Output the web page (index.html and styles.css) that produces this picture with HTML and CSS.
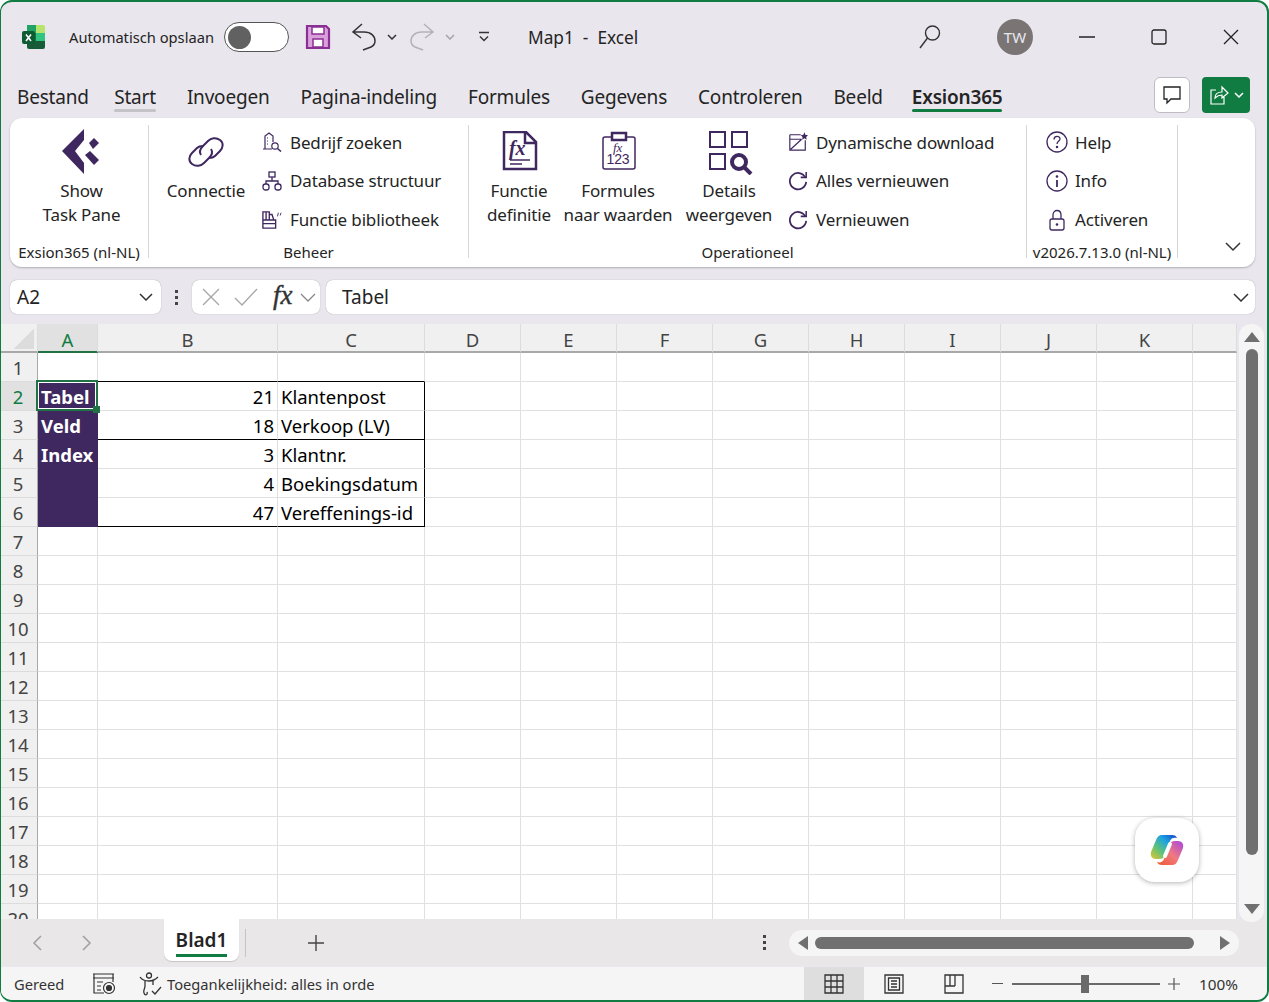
FILE: index.html
```html
<!DOCTYPE html>
<html lang="nl">
<head>
    <meta charset="UTF-8">
    <title>Map1 - Excel</title>
    <link rel="stylesheet" href="styles.css">
</head>
<body>
<div class="window">
    <!-- title bar -->
    <header class="titlebar">
        <svg class="app-icon" width="26" height="26" viewBox="0 0 26 26">
            <rect x="7" y="1" width="9" height="8" fill="#21a366"/>
            <path d="M16 1h7a2 2 0 0 1 2 2v6h-9z" fill="#b7e46c"/>
            <rect x="7" y="9" width="9" height="8" fill="#107c41"/>
            <rect x="16" y="9" width="9" height="8" fill="#33c481"/>
            <path d="M7 17h18v6a2 2 0 0 1-2 2H9a2 2 0 0 1-2-2z" fill="#185c37"/>
            <rect x="2" y="7" width="13" height="13" rx="2" fill="#0f5c33"/>
            <path d="M6 10.500l5 6.500M11 10.500L6 17" stroke="#fff" stroke-width="1.600" fill="none"/>
        </svg>
        <span class="autosave">Automatisch opslaan</span>
        <span class="toggle"><span class="toggle-knob"></span></span>
        <svg class="save-icon" width="26" height="26" viewBox="0 0 26 26">
            <path d="M2 2h19l3 3v19H2z" fill="#d9a0dc" stroke="#8a2f93" stroke-width="2.200"/>
            <rect x="7" y="3" width="12" height="7" fill="#fff" stroke="#8a2f93" stroke-width="1.500"/>
            <rect x="8" y="15" width="10" height="8" fill="#fff" stroke="#8a2f93" stroke-width="1.500"/>
        </svg>
        <svg class="undo-icon" width="26" height="28" viewBox="0 0 26 28" fill="none" stroke="#333" stroke-width="1.500">
            <path d="M11 1L2 9l8 6M2 9h11c7 0 11 4 11 9 0 3-2 5-4 6l-8 3"/>
        </svg>
        <svg class="chev-small" width="10" height="6" viewBox="0 0 10 6" fill="none" stroke="#333" stroke-width="1.500"><path d="M1 1l4 4 4-4"/></svg>
        <svg class="redo-icon" width="26" height="28" viewBox="0 0 26 28" fill="none" stroke="#b4b2b8" stroke-width="1.500">
            <path d="M15 1l9 8-8 6M24 9H13C6 9 2 13 2 18c0 3 2 5 4 6l8 3"/>
        </svg>
        <svg class="chev-small" width="10" height="6" viewBox="0 0 10 6" fill="none" stroke="#a5a3a9" stroke-width="1.500"><path d="M1 1l4 4 4-4"/></svg>
        <svg class="custom-icon" width="12" height="12" viewBox="0 0 12 12" fill="none" stroke="#333" stroke-width="1.400"><path d="M1 1.500h10M2 5.500l4 4 4-4"/></svg>
        <span class="doc-title">Map1&nbsp; -&nbsp; Excel</span>
        <svg class="search-icon" width="24" height="26" viewBox="0 0 24 26" fill="none" stroke="#333" stroke-width="1.400">
            <circle cx="14.500" cy="9" r="7"/><path d="M9.500 14L2 24"/>
        </svg>
        <span class="avatar">TW</span>
        <span class="win-btn win-first"><svg width="16" height="16" viewBox="0 0 16 16" stroke="#222" stroke-width="1.300"><path d="M0 8h16"/></svg></span>
        <span class="win-btn"><svg width="16" height="16" viewBox="0 0 16 16" fill="none" stroke="#222" stroke-width="1.300"><rect x="1" y="1" width="14" height="14" rx="2"/></svg></span>
        <span class="win-btn"><svg width="16" height="16" viewBox="0 0 16 16" stroke="#222" stroke-width="1.300"><path d="M1 1l14 14M15 1L1 15"/></svg></span>
    </header>

    <!-- ribbon tabs -->
    <nav class="tabs">
        <span class="tab tab-first">Bestand</span>
        <span class="tab tab-start">Start</span>
        <span class="tab">Invoegen</span>
        <span class="tab">Pagina-indeling</span>
        <span class="tab">Formules</span>
        <span class="tab">Gegevens</span>
        <span class="tab">Controleren</span>
        <span class="tab tab-beeld">Beeld</span>
        <span class="tab tab-active">Exsion365</span>
        <span class="comment-btn">
            <svg width="20" height="20" viewBox="0 0 20 20" fill="none" stroke="#222" stroke-width="1.300"><path d="M2 2h16v12H9l-4 4v-4H2z"/></svg>
        </span>
        <span class="share-btn">
            <svg width="20" height="20" viewBox="0 0 20 20" fill="none" stroke="#fff" stroke-width="1.200"><path d="M7 5H2v14h13v-7M6 13c0-4 3-6 7-6V2l6 6-6 5V10c-3 0-5 1-7 3z"/></svg>
            <svg width="10" height="6" viewBox="0 0 10 6" fill="none" stroke="#fff" stroke-width="1.500"><path d="M1 1l4 4 4-4"/></svg>
        </span>
    </nav>

    <!-- ribbon -->
    <section class="ribbon">
        <div class="group group-pane">
            <div class="group-items">
                <div class="big-btn">
                    <svg class="big-icon" width="40" height="46" viewBox="0 0 40 46" fill="#3f2760">
                        <path d="M22 0L0 22l22 23V34L13 22l9-11z"/>
                        <path d="M27 14l5-5 5 5-6 6z"/>
                        <path d="M23 26l5-4 9 9-5 5z"/>
                    </svg>
                    <span>Show<br>Task Pane</span>
                </div>
            </div>
            <div class="group-label">Exsion365 (nl-NL)</div>
        </div>
        <div class="group group-beheer">
            <div class="group-items">
                <div class="big-btn btn-conn">
                    <svg class="big-icon" width="36" height="34" viewBox="0 0 36 34" fill="none" stroke="#3f2760" stroke-width="2">
                        <path d="M13 20c-2-3-1-6 2-9l5-5c3-3 8-4 12-1s3 8 0 11l-5 5c-2 2-4 2-6 2"/>
                        <path d="M23 14c2 3 1 6-2 9l-5 5c-3 3-8 4-12 1s-3-8 0-11l5-5c2-2 4-2 6-2"/>
                    </svg>
                    <span>Connectie</span>
                </div>
                <div class="small-list">
                    <div class="small-btn">
                        <svg width="20" height="20" viewBox="0 0 20 20" fill="none" stroke="#3f2760" stroke-width="1.200"><path d="M3 17V4l4-3 4 3v6M1 17h9M5 6h1M5 9h1M5 12h1"/><circle cx="13" cy="14" r="3.200"/><path d="M15.500 16.500L19 19.500" stroke-width="1.600"/></svg>
                        <span>Bedrijf zoeken</span>
                    </div>
                    <div class="small-btn">
                        <svg width="20" height="20" viewBox="0 0 20 20" fill="none" stroke="#3f2760" stroke-width="1.300"><rect x="7" y="1" width="6" height="5"/><rect x="1" y="13" width="6" height="6" rx="2.500"/><rect x="13" y="13" width="6" height="6" rx="2.500"/><path d="M10 6v4M4 13v-3h12v3"/></svg>
                        <span>Database structuur</span>
                    </div>
                    <div class="small-btn">
                        <svg width="22" height="20" viewBox="0 0 22 20" fill="none" stroke="#3f2760" stroke-width="1.500"><path d="M1 1h7v9H1zM4.500 1v9M8 4h3l2 6H1M1 10h14v4H1zM1 14h14v5H1z"/><path d="M17 6l1-4M20 5l1-3" stroke-width="1"/></svg>
                        <span>Functie bibliotheek</span>
                    </div>
                </div>
            </div>
            <div class="group-label">Beheer</div>
        </div>
        <div class="group group-oper">
            <div class="group-items">
                <div class="big-btn btn-func">
                    <svg class="big-icon icon-doc" width="36" height="40" viewBox="0 0 36 40" fill="none" stroke="#3f2760" stroke-width="2.500">
                        <path d="M2 1h22l10 10v27H2zM23 1v11h11"/>
                        <path d="M8 29h20M8 33h12" stroke-width="1.300"/>
                        <text x="7" y="24" class="svg-fx">fx</text>
                    </svg>
                    <span>Functie<br>definitie</span>
                </div>
                <div class="big-btn btn-form">
                    <svg class="big-icon icon-doc" width="34" height="40" viewBox="0 0 34 40" fill="none" stroke="#3f2760" stroke-width="1.500">
                        <path d="M9 6H3a2 2 0 0 0-2 2v28a2 2 0 0 0 2 2h28a2 2 0 0 0 2-2V8a2 2 0 0 0-2-2h-6"/>
                        <rect x="10" y="2" width="14" height="7" stroke-width="2.500"/>
                        <text x="11" y="21" class="svg-fx-small">fx</text>
                        <text x="4.500" y="33" class="svg-num">123</text>
                    </svg>
                    <span>Formules<br>naar waarden</span>
                </div>
                <div class="big-btn btn-det">
                    <svg class="big-icon icon-det" width="44" height="44" viewBox="0 0 44 44" fill="none" stroke="#3f2760" stroke-width="2">
                        <rect x="1" y="1" width="15" height="15"/><rect x="23" y="1" width="15" height="15"/><rect x="1" y="23" width="15" height="15"/>
                        <circle cx="30" cy="31" r="7" stroke-width="4"/><path d="M35 36l7 7" stroke-width="4"/>
                    </svg>
                    <span>Details<br>weergeven</span>
                </div>
                <div class="small-list list-oper">
                    <div class="small-btn">
                        <svg width="22" height="22" viewBox="0 0 22 22" fill="none" stroke="#3f2760" stroke-width="1.300"><path d="M2 3h12M2 3v17h17V9M2 8h13M3 19L15 8"/><path d="M18 0l1 3 3 .5-2 2 .5 3-2.500-1.500-2.500 1.500.5-3-2-2 3-.5z" fill="#3f2760" stroke="none"/></svg>
                        <span>Dynamische download</span>
                    </div>
                    <div class="small-btn">
                        <svg width="22" height="22" viewBox="0 0 22 22" fill="none" stroke="#3f2760" stroke-width="1.900"><path d="M19 7a9 9 0 1 0 1 5"/><path d="M20 1v6h-6" stroke-width="1.700"/></svg>
                        <span>Alles vernieuwen</span>
                    </div>
                    <div class="small-btn">
                        <svg width="22" height="22" viewBox="0 0 22 22" fill="none" stroke="#3f2760" stroke-width="1.900"><path d="M19 7a9 9 0 1 0 1 5"/><path d="M20 1v6h-6" stroke-width="1.700"/></svg>
                        <span>Vernieuwen</span>
                    </div>
                </div>
            </div>
            <div class="group-label">Operationeel</div>
        </div>
        <div class="group group-help">
            <div class="group-items">
                <div class="small-list list-help">
                    <div class="small-btn">
                        <svg width="22" height="22" viewBox="0 0 22 22" fill="none" stroke="#3f2760" stroke-width="1.300"><circle cx="11" cy="11" r="10"/><path d="M8 8.500c0-4 6-4 6-.5 0 2-3 2-3 5"/><circle cx="11" cy="16" r=".6"/></svg>
                        <span>Help</span>
                    </div>
                    <div class="small-btn">
                        <svg width="22" height="22" viewBox="0 0 22 22" fill="none" stroke="#3f2760" stroke-width="1.300"><circle cx="11" cy="11" r="10"/><path d="M11 10v7" stroke-width="1.800"/><circle cx="11" cy="6.500" r=".7"/></svg>
                        <span>Info</span>
                    </div>
                    <div class="small-btn">
                        <svg width="22" height="22" viewBox="0 0 22 22" fill="none" stroke="#3f2760" stroke-width="1.300"><rect x="4" y="10" width="14" height="11" rx="2"/><path d="M7 10V6c0-6 8-6 8 0v4"/><circle cx="11" cy="15.500" r=".7"/></svg>
                        <span>Activeren</span>
                    </div>
                </div>
            </div>
            <div class="group-label">v2026.7.13.0 (nl-NL)</div>
        </div>
        <div class="ribbon-end">
            <svg width="16" height="10" viewBox="0 0 16 10" fill="none" stroke="#333" stroke-width="1.500"><path d="M1 1l7 7 7-7"/></svg>
        </div>
    </section>

    <!-- formula bar -->
    <div class="formula-bar">
        <div class="name-box">
            <span>A2</span>
            <svg width="14" height="8" viewBox="0 0 14 8" fill="none" stroke="#333" stroke-width="1.500"><path d="M1 1l6 6 6-6"/></svg>
        </div>
        <div class="fb-dots"><i></i><i></i><i></i></div>
        <div class="fb-buttons">
            <svg width="18" height="18" viewBox="0 0 18 18" stroke="#a8a8a8" stroke-width="1.400"><path d="M1 1l16 16M17 1L1 17"/></svg>
            <svg width="24" height="18" viewBox="0 0 24 18" fill="none" stroke="#a8a8a8" stroke-width="1.400"><path d="M1 10l7 7L23 1"/></svg>
            <span class="fx">fx</span>
            <svg width="16" height="9" viewBox="0 0 16 9" fill="none" stroke="#888" stroke-width="1.300"><path d="M1 1l7 7 7-7"/></svg>
        </div>
        <div class="fb-input">
            <span>Tabel</span>
            <svg width="16" height="9" viewBox="0 0 16 9" fill="none" stroke="#333" stroke-width="1.500"><path d="M1 1l7 7 7-7"/></svg>
        </div>
    </div>

    <!-- sheet -->
    <div class="sheet-area">
        <div class="sheet">
            <table class="cells">
                <colgroup>
                    <col class="c-head"><col class="c-a"><col class="c-b"><col class="c-c">
                    <col class="c-n"><col class="c-n"><col class="c-n"><col class="c-n"><col class="c-n"><col class="c-n"><col class="c-n"><col class="c-n"><col>
                </colgroup>
                <thead>
                    <tr>
                        <th class="corner"><span class="corner-mark"></span></th>
                        <th class="col-sel">A</th><th>B</th><th>C</th><th>D</th><th>E</th><th>F</th><th>G</th><th>H</th><th>I</th><th>J</th><th>K</th><th></th>
                    </tr>
                </thead>
                <tbody>
                    <tr><th>1</th><td></td><td class="bottom-line"></td><td class="bottom-line"></td><td></td><td></td><td></td><td></td><td></td><td></td><td></td><td></td><td></td></tr>
                    <tr><th class="row-sel">2</th><td class="label current">Tabel<span class="sel-box"><span class="sel-handle"></span></span></td><td class="num">21</td><td class="txt end-line">Klantenpost</td><td></td><td></td><td></td><td></td><td></td><td></td><td></td><td></td><td></td></tr>
                    <tr><th>3</th><td class="label">Veld</td><td class="num bottom-line">18</td><td class="txt bottom-line end-line">Verkoop (LV)</td><td></td><td></td><td></td><td></td><td></td><td></td><td></td><td></td><td></td></tr>
                    <tr><th>4</th><td class="label">Index</td><td class="num">3</td><td class="txt end-line">Klantnr.</td><td></td><td></td><td></td><td></td><td></td><td></td><td></td><td></td><td></td></tr>
                    <tr><th>5</th><td class="label"></td><td class="num">4</td><td class="txt end-line">Boekingsdatum</td><td></td><td></td><td></td><td></td><td></td><td></td><td></td><td></td><td></td></tr>
                    <tr><th>6</th><td class="label"></td><td class="num bottom-line">47</td><td class="txt bottom-line end-line">Vereffenings-id</td><td></td><td></td><td></td><td></td><td></td><td></td><td></td><td></td><td></td></tr>
                    <tr><th>7</th><td></td><td></td><td></td><td></td><td></td><td></td><td></td><td></td><td></td><td></td><td></td><td></td></tr>
                    <tr><th>8</th><td></td><td></td><td></td><td></td><td></td><td></td><td></td><td></td><td></td><td></td><td></td><td></td></tr>
                    <tr><th>9</th><td></td><td></td><td></td><td></td><td></td><td></td><td></td><td></td><td></td><td></td><td></td><td></td></tr>
                    <tr><th>10</th><td></td><td></td><td></td><td></td><td></td><td></td><td></td><td></td><td></td><td></td><td></td><td></td></tr>
                    <tr><th>11</th><td></td><td></td><td></td><td></td><td></td><td></td><td></td><td></td><td></td><td></td><td></td><td></td></tr>
                    <tr><th>12</th><td></td><td></td><td></td><td></td><td></td><td></td><td></td><td></td><td></td><td></td><td></td><td></td></tr>
                    <tr><th>13</th><td></td><td></td><td></td><td></td><td></td><td></td><td></td><td></td><td></td><td></td><td></td><td></td></tr>
                    <tr><th>14</th><td></td><td></td><td></td><td></td><td></td><td></td><td></td><td></td><td></td><td></td><td></td><td></td></tr>
                    <tr><th>15</th><td></td><td></td><td></td><td></td><td></td><td></td><td></td><td></td><td></td><td></td><td></td><td></td></tr>
                    <tr><th>16</th><td></td><td></td><td></td><td></td><td></td><td></td><td></td><td></td><td></td><td></td><td></td><td></td></tr>
                    <tr><th>17</th><td></td><td></td><td></td><td></td><td></td><td></td><td></td><td></td><td></td><td></td><td></td><td></td></tr>
                    <tr><th>18</th><td></td><td></td><td></td><td></td><td></td><td></td><td></td><td></td><td></td><td></td><td></td><td></td></tr>
                    <tr><th>19</th><td></td><td></td><td></td><td></td><td></td><td></td><td></td><td></td><td></td><td></td><td></td><td></td></tr>
                    <tr><th>20</th><td></td><td></td><td></td><td></td><td></td><td></td><td></td><td></td><td></td><td></td><td></td><td></td></tr>
                </tbody>
            </table>
            <div class="copilot">
                <svg width="34" height="32" viewBox="0 0 34 32">
                    <defs>
                        <linearGradient id="cpA" x1="0" y1="1" x2="1" y2="0">
                            <stop offset="0" stop-color="#e8c52c"/><stop offset=".35" stop-color="#5fc27a"/><stop offset=".65" stop-color="#1fa4e0"/><stop offset="1" stop-color="#1440c8"/>
                        </linearGradient>
                        <linearGradient id="cpB" x1="0" y1="1" x2="1" y2="0">
                            <stop offset="0" stop-color="#f0562e"/><stop offset=".5" stop-color="#f07a80"/><stop offset="1" stop-color="#a845e0"/>
                        </linearGradient>
                    </defs>
                    <path d="M22 31H12c-3 0-4-1-5-3 3 1 6 0 7-3l5-14c1-3 3-4 6-4h3c4 0 6 3 5 7l-5 12c-1 3-3 5-6 5z" fill="url(#cpB)"/>
                    <path d="M12 1h10c3 0 4 1 5 3-3-1-6 0-7 3l-5 14c-1 3-3 4-6 4H6C2 25 0 22 1 18L6 6c1-3 3-5 6-5z" fill="url(#cpA)"/>
                    <path d="M20 10l-5 12" stroke="#fff" stroke-width="4" stroke-linecap="round"/>
                </svg>
            </div>
        </div>
        <div class="v-scroll">
            <span class="arrow-up"></span>
            <span class="v-thumb"></span>
            <span class="arrow-down"></span>
        </div>
    </div>

    <!-- sheet tabs -->
    <div class="tabstrip">
        <svg class="nav-prev" width="10" height="16" viewBox="0 0 10 16" fill="none" stroke="#a0a0a0" stroke-width="1.500"><path d="M9 1L2 8l7 7"/></svg>
        <svg class="nav-next" width="10" height="16" viewBox="0 0 10 16" fill="none" stroke="#a0a0a0" stroke-width="1.500"><path d="M1 1l7 7-7 7"/></svg>
        <div class="sheet-tab"><span>Blad1</span></div>
        <span class="tab-sep"></span>
        <svg class="add-sheet" width="18" height="18" viewBox="0 0 18 18" stroke="#444" stroke-width="1.400"><path d="M9 1v16M1 9h16"/></svg>
        <div class="fb-dots strip-dots"><i></i><i></i><i></i></div>
        <div class="h-scroll">
            <span class="arrow-left"></span>
            <span class="h-thumb"></span>
            <span class="arrow-right"></span>
        </div>
    </div>

    <!-- status bar -->
    <footer class="statusbar">
        <span class="st-ready">Gereed</span>
        <svg class="st-macro" width="24" height="22" viewBox="0 0 24 22" fill="none" stroke="#333" stroke-width="1.200">
            <path d="M1 1h21M1 5h21M2 1v19h10M21 1v8M5 9h6M5 13h4M5 17h4"/>
            <circle cx="17" cy="15" r="5.500"/><circle cx="17" cy="15" r="2.500" fill="#333"/>
        </svg>
        <svg class="st-access" width="24" height="24" viewBox="0 0 24 24" fill="none" stroke="#333" stroke-width="1.300">
            <circle cx="10" cy="3.500" r="2.500"/>
            <path d="M1 5c2 3 5 4 9 4s6-1 9-4M6 9v5c0 3-2 4-1 7s4 2 3-1M14 9v4M13 19l3 3 6-7"/>
        </svg>
        <span class="st-text">Toegankelijkheid: alles in orde</span>
        <span class="view-btn view-on">
            <svg width="20" height="20" viewBox="0 0 20 20" fill="none" stroke="#333" stroke-width="1.300"><path d="M1 1h18v18H1zM7 1v18M13 1v18M1 7h18M1 13h18"/></svg>
        </span>
        <span class="view-btn">
            <svg width="20" height="20" viewBox="0 0 20 20" fill="none" stroke="#333" stroke-width="1.300"><path d="M1 1h18v18H1zM4.500 4h11v12h-11zM7 7h6M7 10h6M7 13h6"/></svg>
        </span>
        <span class="view-btn">
            <svg width="20" height="20" viewBox="0 0 20 20" fill="none" stroke="#333" stroke-width="1.300"><path d="M1 1h18v18H1zM1 12h10M6 1v11M11 1v11"/></svg>
        </span>
        <span class="zoom-minus"></span>
        <span class="zoom-track"><span class="zoom-thumb"></span></span>
        <svg class="zoom-plus" width="12" height="12" viewBox="0 0 12 12" stroke="#555" stroke-width="1.200"><path d="M6 0v12M0 6h12"/></svg>
        <span class="zoom-val">100%</span>
    </footer>
</div>
</body>
</html>
```
FILE: styles.css
```css
* {
    margin: 0;
    padding: 0;
    box-sizing: border-box;
}

body {
    width: 1269px;
    height: 1002px;
    overflow: hidden;
    font-family: "Noto Sans", sans-serif;
    color: #242424;
    background: #fff;
}

.window {
    width: 1269px;
    height: 1002px;
    display: flex;
    flex-direction: column;
    background: #e9e6ed;
    border: 2px solid #107c41;
    border-width: 2px 2px 2px 1px;
    border-radius: 12px;
    overflow: hidden;
}

/* title bar */
.titlebar {
    height: 70px;
    flex: none;
    display: flex;
    align-items: center;
    padding-left: 19px;
}

.autosave {
    margin-left: 23px;
    font-size: 14.700px;
    width: 155px;
    white-space: nowrap;
}

.toggle {
    width: 65px;
    height: 30px;
    border: 1px solid #555;
    border-radius: 15px;
    background: #fff;
    display: flex;
    align-items: center;
    padding-left: 3px;
}

.toggle-knob {
    width: 23px;
    height: 23px;
    border-radius: 50%;
    background: #616161;
}

.save-icon { margin-left: 16px; }
.undo-icon { margin-left: 20px; }
.chev-small { margin-left: 10px; }
.redo-icon { margin-left: 12px; }
.custom-icon { margin-left: 23px; }

.doc-title {
    margin-left: 38px;
    font-size: 17.300px;
    width: 390px;
    white-space: nowrap;
}

.avatar {
    margin-left: 55px;
    width: 36px;
    height: 36px;
    border-radius: 50%;
    background: #7a7574;
    color: #e8e8f0;
    font-size: 15px;
    display: flex;
    align-items: center;
    justify-content: center;
}

.win-btn {
    width: 72px;
    display: flex;
    justify-content: center;
}

.win-first { margin-left: 18px; }

/* ribbon tabs */
.tabs {
    height: 46px;
    flex: none;
    display: flex;
    align-items: center;
    gap: 31px;
    padding: 3px 0 0 16px;
    font-size: 19px;
    letter-spacing: -0.2px;
}

.tab {
    position: relative;
    white-space: nowrap;
}

.tab-first { margin-right: -5.500px; }
.tab-beeld { margin-right: -2px; }

.tab-start::after,
.tab-active::after {
    content: "";
    position: absolute;
    left: 0;
    right: 0;
    bottom: -2px;
    height: 3px;
    border-radius: 2px;
    background: #c4c4c6;
}

.tab-active {
    font-weight: 600;
}

.tab-active::after {
    background: #107c41;
}

.comment-btn {
    margin-left: auto;
    margin-top: -4px;
    width: 36px;
    height: 36px;
    background: #fff;
    border: 1px solid #c0bcc4;
    border-radius: 6px;
    display: flex;
    align-items: center;
    justify-content: center;
}

.share-btn {
    margin: -4px 17px 0 -19px;
    width: 48px;
    height: 36px;
    background: #107c41;
    border-radius: 4px;
    display: flex;
    align-items: center;
    justify-content: center;
    gap: 5px;
}

/* ribbon */
.ribbon {
    height: 149px;
    flex: none;
    margin-left: 9px;
    width: 1245px;
    background: #fff;
    border-radius: 12px;
    box-shadow: 0 1px 2px rgba(0, 0, 0, 0.25);
    display: flex;
    padding-top: 7px;
    font-size: 17px;
    letter-spacing: -0.15px;
}

.group {
    display: flex;
    flex-direction: column;
    border-right: 1px solid #d6d6d6;
    height: 133px;
}

.group-pane { width: 139px; }
.group-beheer { width: 320px; }
.group-oper { width: 558px; }
.group-help { width: 151px; }

.group-items {
    height: 114px;
    flex: none;
    display: flex;
}

.group-label {
    height: 19px;
    text-align: center;
    font-size: 15px;
    letter-spacing: 0;
    line-height: 26px;
    white-space: nowrap;
}

.big-btn {
    display: flex;
    flex-direction: column;
    align-items: center;
    text-align: center;
    line-height: 24px;
    white-space: nowrap;
}

.big-btn .big-icon {
    height: 46px;
    margin: 4px 0;
    flex: none;
}

.big-btn .icon-doc {
    height: 40px;
    margin: 6px 0 8px 2px;
}

.big-btn .icon-det {
    height: 44px;
    margin: 6px 0 4px 3px;
}

.group-pane .big-btn {
    width: 100%;
    padding-left: 5px;
}

.btn-conn { width: 96px; margin-left: 9px; }
.btn-func { width: 90px; margin-left: 5px; }
.btn-form { width: 108px; }
.btn-det { width: 114px; }

.small-list {
    display: flex;
    flex-direction: column;
    margin: 1px 0 0 8px;
    gap: 6.800px;
}

.small-btn {
    height: 32px;
    display: flex;
    align-items: center;
    gap: 8px;
    white-space: nowrap;
}

.small-btn svg {
    width: 20px;
    flex: none;
}

.list-oper { margin-left: 2px; }
.list-help { margin-left: 19px; }
.list-help .small-btn { gap: 7px; }
.list-help .small-btn svg { width: 22px; }

.svg-fx {
    font: italic 700 20px "Liberation Serif", serif;
    fill: #3f2760;
    stroke: none;
}

.svg-fx-small {
    font: italic 400 13px "Liberation Serif", serif;
    fill: #3f2760;
    stroke: none;
}

.svg-num {
    font: 400 14px "Liberation Sans", sans-serif;
    fill: #3f2760;
    stroke: none;
}

.ribbon-end {
    flex: 1;
    display: flex;
    align-items: flex-end;
    justify-content: flex-end;
    padding: 0 14px 15px 0;
}

/* formula bar */
.formula-bar {
    height: 34px;
    flex: none;
    margin-top: 13px;
    padding-left: 9px;
    display: flex;
    font-size: 19px;
}

.name-box,
.fb-buttons,
.fb-input {
    background: #fff;
    border-radius: 7px;
    box-shadow: 0 0 1px rgba(0, 0, 0, 0.4);
    display: flex;
    align-items: center;
}

.name-box {
    width: 151px;
    justify-content: space-between;
    padding: 0 8px 0 7px;
}

.fb-dots {
    width: 31px;
    display: flex;
    flex-direction: column;
    align-items: center;
    justify-content: center;
    gap: 3px;
}

.fb-dots i {
    width: 3px;
    height: 3px;
    background: #444;
}

.fb-buttons {
    width: 128px;
    padding-left: 10px;
    gap: 14px;
    color: #333;
}

.fb-buttons .fx {
    font: italic 400 27px "Liberation Serif", serif;
    -webkit-text-stroke: 0.4px #333;
    margin: -4px -7px 0 1px;
}

.fb-input {
    width: 929px;
    margin-left: 6px;
    padding: 0 6px 0 16px;
    justify-content: space-between;
}

/* sheet */
.sheet-area {
    height: 595px;
    flex: none;
    margin-top: 10px;
    display: flex;
}

.sheet {
    position: relative;
    width: 1236px;
    overflow: hidden;
    background: #fff;
}

.cells {
    width: 1236px;
    table-layout: fixed;
    border-collapse: separate;
    border-spacing: 0;
    font-size: 18.500px;
    color: #000;
}

.c-head { width: 37px; }
.c-a { width: 60px; }
.c-b { width: 180px; }
.c-c { width: 147px; }
.c-n { width: 96px; }

.cells tr {
    height: 29px;
}

.cells th {
    font-weight: 400;
    font-size: 18.500px;
    color: #444;
    background: #f0f0f0;
    text-align: center;
    border-right: 1px solid #dcdcdc;
    border-bottom: 1px solid #dcdcdc;
    padding: 0;
}

.cells thead th {
    border-bottom: 2px solid #a8a8a8;
    line-height: 23px;
    padding-top: 4px;
}

.cells td {
    border-right: 1px solid #e0e0e0;
    border-bottom: 1px solid #e0e0e0;
    padding: 1px 3px 0;
    white-space: nowrap;
    overflow: hidden;
}

.cells tbody th {
    border-right-color: #a8a8a8;
    padding-right: 2px;
    line-height: 25px;
}

.corner {
    position: relative;
}

.corner-mark {
    position: absolute;
    right: 3px;
    bottom: 2px;
    width: 20px;
    height: 20px;
    background: linear-gradient(135deg, transparent 50%, #dcdcdc 50%);
}

.cells .col-sel {
    background: #e1e1e1;
    color: #107c41;
    border-bottom-color: #217346;
}

.cells .row-sel {
    background: #e1e1e1;
    color: #107c41;
}

.cells td.label {
    background: #3f2760;
    color: #fff;
    font-weight: 700;
    border-color: #3f2760;
}

.cells td.current {
    position: relative;
    overflow: visible;
}

.sel-box {
    position: absolute;
    top: -2px;
    left: -2px;
    width: 62px;
    height: 31px;
    border: 2px solid #217346;
    box-shadow: inset 0 0 0 1px #fff;
}

.sel-handle {
    position: absolute;
    right: -4px;
    bottom: -4px;
    width: 7px;
    height: 7px;
    background: #217346;
}

.cells td.num { text-align: right; padding-right: 3px; }
.cells td.bottom-line { border-bottom-color: #000; }
.cells td.end-line { border-right-color: #000; }

.copilot {
    position: absolute;
    left: 1134px;
    top: 494px;
    width: 64px;
    height: 64px;
    border-radius: 20px;
    background: #fff;
    box-shadow: 0 1px 5px rgba(0, 0, 0, 0.3);
    display: flex;
    align-items: center;
    justify-content: center;
}

.v-scroll {
    width: 25px;
    margin: 0 0 0 2px;
    height: 598px;
    border-radius: 12px;
    background: #f5f5f5;
    display: flex;
    flex-direction: column;
    align-items: center;
    position: relative;
    z-index: 1;
}

.arrow-up {
    margin-top: 8px;
    width: 0;
    height: 0;
    border: 8px solid transparent;
    border-top: 0;
    border-bottom: 10px solid #707070;
}

.v-thumb {
    margin-top: 7px;
    width: 12px;
    height: 506px;
    border-radius: 6px;
    background: #707070;
}

.arrow-down {
    margin-top: auto;
    margin-bottom: 8px;
    width: 0;
    height: 0;
    border: 8px solid transparent;
    border-bottom: 0;
    border-top: 10px solid #707070;
}

/* sheet tabs */
.tabstrip {
    height: 47px;
    flex: none;
    display: flex;
    align-items: center;
    background: #e9e7e7;
}

.nav-prev { margin-left: 31px; }
.nav-next { margin-left: 40px; }

.sheet-tab {
    margin-left: 72px;
    align-self: flex-start;
    width: 75px;
    height: 42px;
    background: #fff;
    border-radius: 0 0 8px 8px;
    box-shadow: 0 1px 1px rgba(0, 0, 0, 0.15);
    display: flex;
    justify-content: center;
    font-size: 19px;
    font-weight: 600;
    padding-top: 6px;
}

.sheet-tab span {
    border-bottom: 3px solid #107c41;
    height: 32px;
    line-height: 30px;
}

.tab-sep {
    margin-left: 6px;
    width: 1px;
    height: 28px;
    background: #c4c4c4;
}

.add-sheet { margin-left: 61px; }

.strip-dots {
    width: 8px;
    margin-left: 435px;
}

.h-scroll {
    margin-left: 21px;
    width: 450px;
    height: 26px;
    border-radius: 13px;
    background: #f5f5f5;
    display: flex;
    align-items: center;
    padding: 0 9px;
}

.arrow-left {
    width: 0;
    height: 0;
    border: 7px solid transparent;
    border-left: 0;
    border-right: 10px solid #707070;
}

.h-thumb {
    margin-left: 7px;
    width: 379px;
    height: 12px;
    border-radius: 6px;
    background: #707070;
}

.arrow-right {
    margin-left: auto;
    width: 0;
    height: 0;
    border: 7px solid transparent;
    border-right: 0;
    border-left: 10px solid #707070;
}

/* status bar */
.statusbar {
    height: 33px;
    flex: none;
    margin-top: 1px;
    display: flex;
    align-items: center;
    background: #f5f5f5;
    font-size: 14.700px;
    color: #333;
    padding-left: 13px;
}

.st-ready { width: 78px; }
.st-text { width: 637px; margin-left: 4px; white-space: nowrap; }
.st-access { margin-left: 23px; }

.view-btn {
    width: 60px;
    height: 100%;
    display: flex;
    align-items: center;
    justify-content: center;
}

.view-on {
    background: #dedede;
}

.zoom-minus {
    margin-left: 8px;
    width: 11px;
    height: 1px;
    background: #555;
}

.zoom-track {
    position: relative;
    margin-left: 9px;
    width: 148px;
    height: 2px;
    background: #6a6a6a;
}

.zoom-thumb {
    position: absolute;
    left: 69px;
    top: -8px;
    width: 8px;
    height: 18px;
    background: #6a6a6a;
}

.zoom-plus { margin-left: 8px; }

.zoom-val {
    margin-left: 19px;
    font-size: 15.300px;
    white-space: nowrap;
}
```
